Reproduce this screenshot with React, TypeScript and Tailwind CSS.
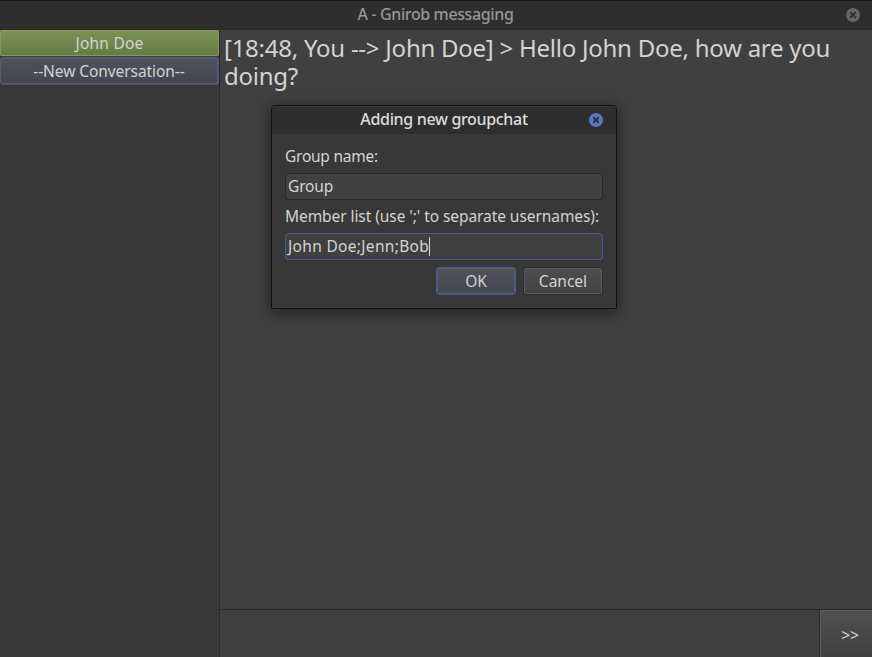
import type { ReactNode } from "react";

function CloseIcon({ disc, cross }: { disc: string; cross: string }) {
  return (
    <svg width="14" height="14" viewBox="0 0 14 14" className="block">
      <circle cx="7" cy="7" r="7" fill={disc} />
      <path d="M4.2 4.2 9.8 9.8M9.8 4.2 4.2 9.8" stroke={cross} strokeWidth="1.9" />
    </svg>
  );
}

function Field({ focused, children }: { focused?: boolean; children: ReactNode }) {
  return (
    <div
      className={
        "flex h-[27px] items-center rounded-[3px] border bg-[#404040] pl-[2px] " +
        (focused ? "border-[#43589c]" : "border-[#292929]")
      }
    >
      {children}
    </div>
  );
}

function Dialog() {
  return (
    <section className="absolute left-[271px] top-[105px] flex h-[204px] w-[346px] flex-col overflow-hidden rounded-t-[4px] border border-[#131313] bg-[#383838] shadow-[0_3px_14px_3px_rgba(0,0,0,0.38)]">
      <header className="flex h-[28px] shrink-0 items-center bg-[#2e2e2e] pr-[13px] shadow-[inset_0_1px_0_#383838]">
        <h2 className="flex-1 pb-[2px] pl-[27px] text-center text-base font-medium leading-[24px] tracking-[-0.33px] text-[#dcdcdc]">
          Adding new groupchat
        </h2>
        <CloseIcon disc="#5f74c6" cross="#2b2d38" />
      </header>
      <div className="flex flex-col px-[13px] pt-[7px]">
        <label className="h-[32px] leading-[31px] tracking-[-0.25px]">Group name:</label>
        <Field>
          <span className="tracking-[-0.15px]">Group</span>
        </Field>
        <label className="h-[33px] whitespace-nowrap leading-[32px] tracking-[-0.07px]">
          Member list (use &apos;;&apos; to separate usernames):
        </label>
        <Field focused>
          <span className="tracking-[0.32px]">John Doe;Jenn;Bob</span>
          <span className="h-[19px] w-px bg-[#d8d8d8]" />
        </Field>
        <div className="mt-[7px] flex justify-end gap-[7px]">
          <button className="h-[28px] w-[80px] rounded-[3px] border border-[#43589c] bg-linear-to-b from-[#50535c] to-[#43464e] pt-[2px] shadow-[inset_0_0_0_1px_#5c5f68]">
            OK
          </button>
          <button className="h-[28px] w-[80px] rounded-[3px] border border-[#292929] bg-linear-to-b from-[#4e4e4e] to-[#424242] pt-[2px] shadow-[inset_0_0_0_1px_#5b5b5b]">
            Cancel
          </button>
        </div>
      </div>
    </section>
  );
}

export default function App() {
  return (
    <div className="relative flex h-[657px] w-[872px] flex-col overflow-hidden bg-[#404040] font-['Noto_Sans','Open_Sans',sans-serif] text-[15.5px] text-[#d3d3d3]">
      <header className="flex h-[30px] shrink-0 items-center border-b border-t border-b-[#292929] border-t-[#151515] bg-[#2e2e2e] pr-[12px]">
        <h1 className="flex-1 pb-[2px] pl-[25px] text-center text-base font-medium leading-[24px] tracking-[-0.38px] text-[#969696]">
          A - Gnirob messaging
        </h1>
        <CloseIcon disc="#646569" cross="#2e2e2e" />
      </header>
      <div className="flex min-h-0 flex-1">
        <aside className="flex w-[220px] flex-col border-r border-[#292929] bg-[#383838]">
          <button className="h-[27px] rounded-[2px] border-b border-[#3c482b] bg-linear-to-b from-[#7c9354] to-[#677946] pt-[2px] tracking-[0.2px] shadow-[inset_0_0_0_1px_#809a57]">
            John Doe
          </button>
          <button className="h-[28px] rounded-[3px] border border-l-0 border-[#43568f] bg-linear-to-b from-[#50535c] to-[#43464e] pt-[2px] tracking-[-0.07px] shadow-[inset_0_0_0_1px_#5c5f68]">
            --New Conversation--
          </button>
        </aside>
        <main className="flex flex-1 flex-col">
          <div className="flex-1 pl-[4px] pt-[4px]">
            <p className="w-[640px] text-2xl leading-[28px] tracking-[-0.25px]">
              [18:48, You --&gt; John Doe] &gt; Hello John Doe, how are you doing?
            </p>
          </div>
          <footer className="flex h-[48px] border-t border-[#292929]">
            <div className="flex-1 border-r border-[#292929]" />
            <button className="w-[52px] rounded-tl-[2px] border-l border-t border-[#606060] bg-linear-to-b from-[#505050] to-[#404040] pl-[7px] pt-[3px]">
              &gt;&gt;
            </button>
          </footer>
        </main>
      </div>
      <Dialog />
    </div>
  );
}
